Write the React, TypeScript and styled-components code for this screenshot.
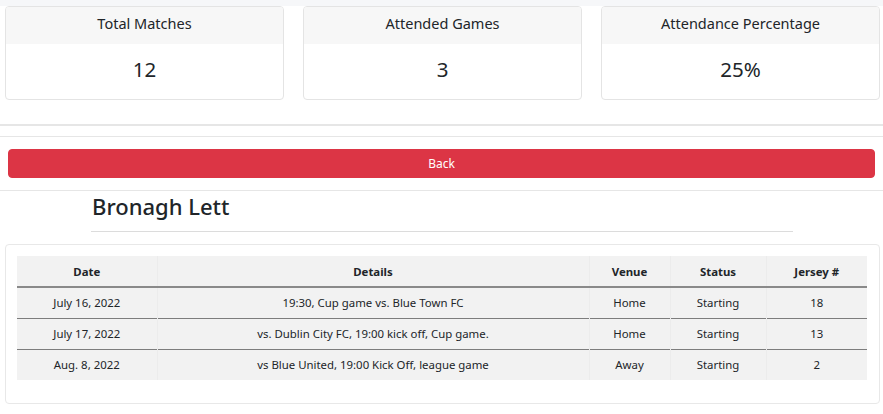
import React from "react";
import styled, { createGlobalStyle } from "styled-components";

const Global = createGlobalStyle`
  html, body { margin: 0; padding: 0; background: #fff; }
  body {
    font-family: "Noto Sans", "Open Sans", sans-serif;
    color: #212529;
  }
  * { box-sizing: border-box; }
`;

const Page = styled.div`
  width: 883px;
  display: flex;
  flex-direction: column;
`;

const TopStrip = styled.div`
  height: 6px;
  background: #f6f7f9;
`;

const StatsRow = styled.div`
  display: grid;
  grid-template-columns: repeat(3, 279px);
  column-gap: 19px;
  padding: 0 0 0 5px;
`;

const StatCard = styled.div`
  border: 1px solid #e4e4e4;
  border-radius: 4px;
  overflow: hidden;
  display: flex;
  flex-direction: column;
  background: #fff;
`;

const StatHeader = styled.div`
  height: 37px;
  background: #f7f7f7;
  display: flex;
  align-items: center;
  justify-content: center;
  font-size: 14.5px;
  padding-bottom: 5px;
`;

const StatValue = styled.div`
  height: 55px;
  display: flex;
  align-items: center;
  justify-content: center;
  font-size: 20.5px;
  padding-bottom: 5px;
`;

const Rule = styled.hr<{ $thick?: boolean; $mt: number }>`
  margin: ${(p) => p.$mt}px 0 0 0;
  border: 0;
  border-top: ${(p) => (p.$thick ? 2 : 1)}px solid #e6e6e6;
`;

const ButtonWrap = styled.div`
  padding: 12px 8px 12px 8px;
`;

const BackButton = styled.button`
  width: 867px;
  height: 29px;
  background: #dc3545;
  color: #fff;
  border: 1px solid #dc3545;
  border-radius: 4px;
  font-family: inherit;
  font-size: 12px;
  display: flex;
  align-items: center;
  justify-content: center;
  padding: 0;
`;

const Heading = styled.h2`
  margin: 0 0 0 91px;
  width: 702px;
  padding: 2px 0 11px 1px;
  font-size: 22px;
  font-weight: 500;
  line-height: 27px;
  border-bottom: 1px solid #dcdcdc;
`;

const TableCard = styled.div`
  margin: 12px 3px 0 5px;
  border: 1px solid #e8e8e8;
  border-radius: 4px;
  padding: 11px 12px 23px 11px;
`;

const Table = styled.table`
  width: 850px;
  border-collapse: collapse;
  table-layout: fixed;
  background: #f2f2f2;
  font-size: 11.4px;
`;

const Th = styled.th`
  height: 31px;
  font-weight: 700;
  text-align: center;
  border-bottom: 2px solid #8a8a8a;
  border-left: 1px solid #ececec;
  padding: 0;
  &:first-child { border-left: 0; }
`;

const Td = styled.td`
  height: 31px;
  text-align: center;
  padding: 0;
  border-left: 1px solid #ececec;
  &:first-child { border-left: 0; }
`;

const Tr = styled.tr<{ $last?: boolean }>`
  border-bottom: ${(p) => (p.$last ? "0" : "1px solid #7d7d7d")};
`;

const stats = [
  { label: "Total Matches", value: "12" },
  { label: "Attended Games", value: "3" },
  { label: "Attendance Percentage", value: "25%" },
];

const rows = [
  ["July 16, 2022", "19:30, Cup game vs. Blue Town FC", "Home", "Starting", "18"],
  ["July 17, 2022", "vs. Dublin City FC, 19:00 kick off, Cup game.", "Home", "Starting", "13"],
  ["Aug. 8, 2022", "vs Blue United, 19:00 Kick Off, league game", "Away", "Starting", "2"],
];

const widths = [140, 432, 81, 96, 101];
const heads = ["Date", "Details", "Venue", "Status", "Jersey #"];

export default function App() {
  return (
    <Page>
      <Global />
      <TopStrip />
      <StatsRow>
        {stats.map((s) => (
          <StatCard key={s.label}>
            <StatHeader>{s.label}</StatHeader>
            <StatValue>{s.value}</StatValue>
          </StatCard>
        ))}
      </StatsRow>
      <Rule $thick $mt={24} />
      <Rule $mt={10} />
      <ButtonWrap>
        <BackButton>Back</BackButton>
      </ButtonWrap>
      <Rule $mt={0} />
      <Heading>Bronagh Lett</Heading>
      <TableCard>
        <Table>
          <colgroup>
            {widths.map((w, i) => (
              <col key={i} style={{ width: w }} />
            ))}
          </colgroup>
          <thead>
            <Tr>
              {heads.map((h) => (
                <Th key={h}>{h}</Th>
              ))}
            </Tr>
          </thead>
          <tbody>
            {rows.map((r, i) => (
              <Tr key={i} $last={i === rows.length - 1}>
                {r.map((c, j) => (
                  <Td key={j}>{c}</Td>
                ))}
              </Tr>
            ))}
          </tbody>
        </Table>
      </TableCard>
    </Page>
  );
}
